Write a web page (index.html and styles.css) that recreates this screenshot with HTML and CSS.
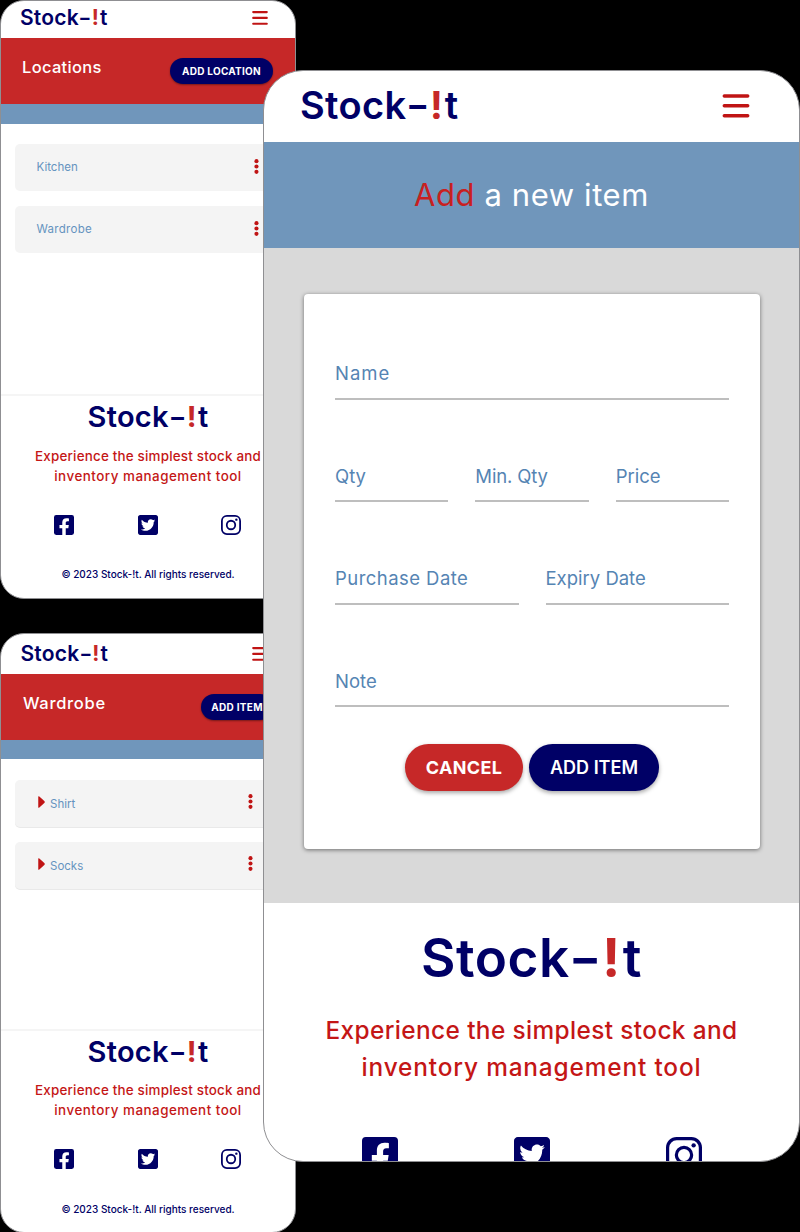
FILE: index.html
```
<!DOCTYPE html>
<html lang="en">
<head>
<meta charset="utf-8">
<title>Stock-!t</title>
<link rel="stylesheet" href="styles.css">
</head>
<body>
<svg width="0" height="0" class="defs" aria-hidden="true">
  <symbol id="facebook" viewBox="0 32 448 448"><path d="M400 32H48A48 48 0 0 0 0 80v352a48 48 0 0 0 48 48h137.25V327.69h-63V256h63v-54.64c0-62.15 37-96.48 93.67-96.48 27.14 0 55.52 4.84 55.52 4.84v61h-31.27c-30.81 0-40.42 19.12-40.42 38.73V256h68.78l-11 71.69h-57.78V480H400a48 48 0 0 0 48-48V80a48 48 0 0 0-48-48z"/></symbol>
  <symbol id="twitter" viewBox="0 32 448 448"><path d="M400 32H48C21.5 32 0 53.5 0 80v352c0 26.5 21.5 48 48 48h352c26.5 0 48-21.5 48-48V80c0-26.5-21.5-48-48-48zm-48.9 158.8c.2 2.8.2 5.7.2 8.5 0 86.7-66 186.6-186.6 186.6-37.2 0-71.7-10.8-100.7-29.4 5.3.6 10.4.8 15.8.8 30.7 0 58.9-10.4 81.4-28-28.8-.6-53-19.5-61.3-45.5 10.1 1.5 19.2 1.5 29.6-1.2-30-6.1-52.5-32.5-52.5-64.4v-.8c8.7 4.9 18.9 7.9 29.6 8.3a65.447 65.447 0 0 1-29.2-54.6c0-12.2 3.2-23.4 8.9-33.1 32.3 39.8 80.8 65.8 135.2 68.6-9.3-44.5 24-80.6 64-80.6 18.9 0 35.9 7.9 47.9 20.7 14.8-2.8 29-8.3 41.6-15.8-4.9 15.2-15.2 28-28.8 36.1 13.2-1.4 26-5.1 37.8-10.2-8.9 13.1-20.1 24.7-32.9 34z"/></symbol>
  <symbol id="instagram" viewBox="0 0 448 448"><rect x="20" y="20" width="408" height="408" rx="112" fill="none" stroke="currentColor" stroke-width="40"/><circle cx="224" cy="224" r="95" fill="none" stroke="currentColor" stroke-width="40"/><circle cx="344" cy="104" r="27"/></symbol>
  <symbol id="menu" viewBox="0 0 27 24"><path d="M1.8 1.9h23.4M1.8 11.8h23.4M1.8 21.7h23.4" fill="none" stroke="currentColor" stroke-width="3.5" stroke-linecap="round"/></symbol>
  <symbol id="dots" viewBox="0 0 4 14"><circle cx="2" cy="2" r="1.9"/><circle cx="2" cy="7" r="1.9"/><circle cx="2" cy="12" r="1.9"/></symbol>
  <symbol id="caret" viewBox="0 0 6 11"><path d="M0 1Q0-.3 1 .4L5.600 4.600Q6.400 5.500 5.600 6.400L1 10.600Q0 11.300 0 10Z"/></symbol>
</svg>

<main class="stage">
  <div class="column">
    <section class="phone small">
      <header class="bar"><span class="logo">Stock<i>-</i><b>!</b>t</span><svg class="menu"><use href="#menu"/></svg></header>
      <div class="hero"><h1 class="hero-title">Locations</h1><button class="btn navy add-location">ADD LOCATION</button></div>
      <div class="stripe"></div>
      <ul class="list">
        <li class="row"><span>Kitchen</span><svg class="dots"><use href="#dots"/></svg></li>
        <li class="row"><span class="wide">Wardrobe</span><svg class="dots"><use href="#dots"/></svg></li>
      </ul>
      <footer class="foot">
        <div class="logo foot-logo">Stock<i>-</i><b>!</b>t</div>
        <p class="tagline"><span class="line-a">Experience the simplest stock and</span><br><span class="line-b">inventory management tool</span></p>
        <div class="social"><svg><use href="#facebook"/></svg><svg><use href="#twitter"/></svg><svg><use href="#instagram"/></svg></div>
        <p class="copy">© 2023 Stock-!t. All rights reserved.</p>
      </footer>
    </section>

    <section class="phone small second">
      <header class="bar"><span class="logo">Stock<i>-</i><b>!</b>t</span><svg class="menu"><use href="#menu"/></svg></header>
      <div class="hero"><h1 class="hero-title">Wardrobe</h1><button class="btn navy add-small">ADD ITEM</button></div>
      <div class="stripe"></div>
      <ul class="list">
        <li class="row"><svg class="caret"><use href="#caret"/></svg><span>Shirt</span><svg class="dots"><use href="#dots"/></svg></li>
        <li class="row"><svg class="caret"><use href="#caret"/></svg><span>Socks</span><svg class="dots"><use href="#dots"/></svg></li>
      </ul>
      <footer class="foot">
        <div class="logo foot-logo">Stock<i>-</i><b>!</b>t</div>
        <p class="tagline"><span class="line-a">Experience the simplest stock and</span><br><span class="line-b">inventory management tool</span></p>
        <div class="social"><svg><use href="#facebook"/></svg><svg><use href="#twitter"/></svg><svg><use href="#instagram"/></svg></div>
        <p class="copy">© 2023 Stock-!t. All rights reserved.</p>
      </footer>
    </section>
  </div>

  <section class="phone large">
    <header class="bar"><span class="logo">Stock<i>-</i><b>!</b>t</span><svg class="menu"><use href="#menu"/></svg></header>
    <h1 class="banner"><em>Add</em> a new item</h1>
    <div class="content">
      <form class="card">
        <div class="fields"><label class="field name-label">Name</label></div>
        <div class="fields"><label class="field">Qty</label><label class="field min">Min. Qty</label><label class="field">Price</label></div>
        <div class="fields"><label class="field purchase">Purchase Date</label><label class="field">Expiry Date</label></div>
        <div class="fields"><label class="field">Note</label></div>
        <div class="actions"><button type="button" class="btn red">CANCEL</button><button type="button" class="btn navy">ADD ITEM</button></div>
      </form>
    </div>
    <footer class="foot">
      <div class="logo foot-logo">Stock<i>-</i><b>!</b>t</div>
      <p class="tagline"><span class="line-a">Experience the simplest stock and</span><br><span class="line-b">inventory management tool</span></p>
      <div class="social"><svg><use href="#facebook"/></svg><svg><use href="#twitter"/></svg><svg><use href="#instagram"/></svg></div>
    </footer>
  </section>
</main>
</body>
</html>
```
FILE: styles.css
```
* { box-sizing: border-box; margin: 0; padding: 0; }
body { background: #000; font-family: Inter, "Liberation Sans", sans-serif; }
.defs { display: block; position: absolute; }
.stage { position: relative; width: 800px; height: 1232px; overflow: hidden; }
.column { display: flex; flex-direction: column; gap: 34px; width: 296px; }

.phone { display: flex; flex-direction: column; background: #fff; border: 1px solid #8f8f92; overflow: hidden; }
.phone svg { fill: currentColor; flex: none; display: block; }
.bar { display: flex; justify-content: space-between; align-items: center; flex: none; }
.logo { color: #000066; font-weight: 600; white-space: nowrap; letter-spacing: .01em; }
.logo i { display: inline-block; margin: 0 .08em 0 .06em; font-style: normal; transform: scaleX(1.35); }
.logo b { margin-right: .04em; color: #c62828; font-weight: 700; }
.menu { color: #c01414; }
.btn { border: 0; color: #fff; font-family: inherit; font-weight: 600; white-space: nowrap; text-align: center; flex: none; }
.navy { background: #000066; }
.red { background: #c62828; }
.foot { text-align: center; }
.tagline { color: #c41616; font-weight: 500; white-space: nowrap; }
.social { display: flex; justify-content: space-between; color: #000066; }

/* List screens */
.small { width: 296px; height: 599px; border-radius: 24px; }
.small .bar { height: 37px; padding: 0 27px 3px 19px; }
.small .logo { font-size: 21px; line-height: 30px; }
.small .menu { width: 16px; height: 14px; }
.hero { display: flex; justify-content: space-between; height: 66px; padding: 18px 22px 0 21px; background: #c62828; flex: none; }
.hero-title { color: #fff; font-size: 16.500px; font-weight: 500; line-height: 22px; letter-spacing: .3px; }
.small .btn { height: 26px; margin-top: 2px; border-radius: 13px; font-size: 10px; line-height: 26px; box-shadow: 0 1px 2px rgba(0,0,0,.4); }
.btn.add-location { width: 103px; font-weight: 700; letter-spacing: .25px; }
.btn.add-small { width: 72px; font-weight: 700; letter-spacing: .3px; }
.stripe { height: 20px; background: #7096bb; flex: none; }
.list { display: flex; flex-direction: column; gap: 15px; padding: 20px 14px 0; height: 272px; list-style: none; border-bottom: 2px solid #f5f5f5; flex: none; }
.row { display: flex; align-items: center; height: 47px; padding: 0 22px 2px 21.500px; border-radius: 5px; background: #f4f4f4; color: #6593bf; font-size: 11.500px; }
.wide { letter-spacing: .3px; }
.dots { width: 5px; height: 15px; margin-left: auto; color: #c01414; }
.small .foot-logo { height: 42px; font-size: 29px; line-height: 42px; }
.small .tagline { margin-top: 8px; font-size: 13.400px; line-height: 20px; }
.small .line-a { letter-spacing: .2px; }
.small .line-b { letter-spacing: .5px; }
.small .social { margin-top: 28.500px; padding: 0 54px 0 53px; }
.small .social svg { width: 20px; height: 20px; }
.copy { margin-top: 32.500px; color: #000066; font-size: 10px; font-weight: 500; line-height: 15px; }

.second { height: 600px; }
.second .bar { height: 40px; padding: 0 27px 0 19.500px; }
.second .hero { padding-left: 22px; }
.second .hero-title { letter-spacing: .7px; }
.second .stripe { height: 19px; }
.second .list { padding: 21px 14px 0 14px; }
.second .foot-logo { height: 42px; line-height: 42px; }
.second .tagline { margin-top: 7px; }
.second .social { margin-top: 29px; }
.second .row { box-shadow: 0 1px 0 #e9e9e9; padding: 0 28px 0 22px; }
.caret { width: 7px; height: 12px; margin: -4px 5px 0 1px; color: #c01414; }
.second .row .dots { margin-top: -4px; }

/* Add item screen */
.large { position: absolute; left: 263px; top: 70px; width: 537px; height: 1092px; border-radius: 40px; }
.large .bar { height: 71px; padding: 0 49px 2px 36px; }
.large .logo { font-size: 38px; line-height: 50px; }
.large .bar .logo { margin-bottom: 2px; }
.large .menu { width: 28px; height: 24px; }
.banner { height: 106px; background: #7096bb; color: #fff; font-size: 31px; font-weight: 400; line-height: 106px; letter-spacing: .6px; text-align: center; flex: none; }
.banner em { color: #c8201f; font-style: normal; }
.content { height: 655px; padding: 46px 39px 0 40px; background: #d9d9d9; flex: none; }
.card { height: 555px; padding: 3px 31px 0; border-radius: 4px; background: #fff; box-shadow: 0 1px 4px rgba(0,0,0,.5); }
.fields { display: flex; gap: 27px; }
.field { flex: 1 1 0; height: 102.6px; padding-top: 64px; border-bottom: 2px solid #bebebe; color: #5584b3; font-size: 18.500px; line-height: 24px; white-space: nowrap; }
.name-label { letter-spacing: 1px; }
.min { letter-spacing: -.15px; }
.purchase { letter-spacing: .45px; }
.actions { display: flex; justify-content: center; gap: 6px; margin-top: 36.600px; }
.large .btn { height: 47px; border-radius: 23.500px; font-size: 18px; line-height: 47px; box-shadow: 0 2px 4px rgba(0,0,0,.35); }
.large .red { width: 118px; font-weight: 700; letter-spacing: .35px; }
.large .actions .navy { width: 130px; }
.large .foot-logo { height: 70px; margin-top: 20px; font-size: 53px; line-height: 70px; }
.large .tagline { margin-top: 19px; font-size: 24.400px; line-height: 36.500px; }
.large .line-a { letter-spacing: .38px; }
.large .line-b { letter-spacing: .85px; }
.large .social { margin-top: 52px; padding: 0 97px 0 98px; }
.large .social svg { width: 36px; height: 36px; }
```
